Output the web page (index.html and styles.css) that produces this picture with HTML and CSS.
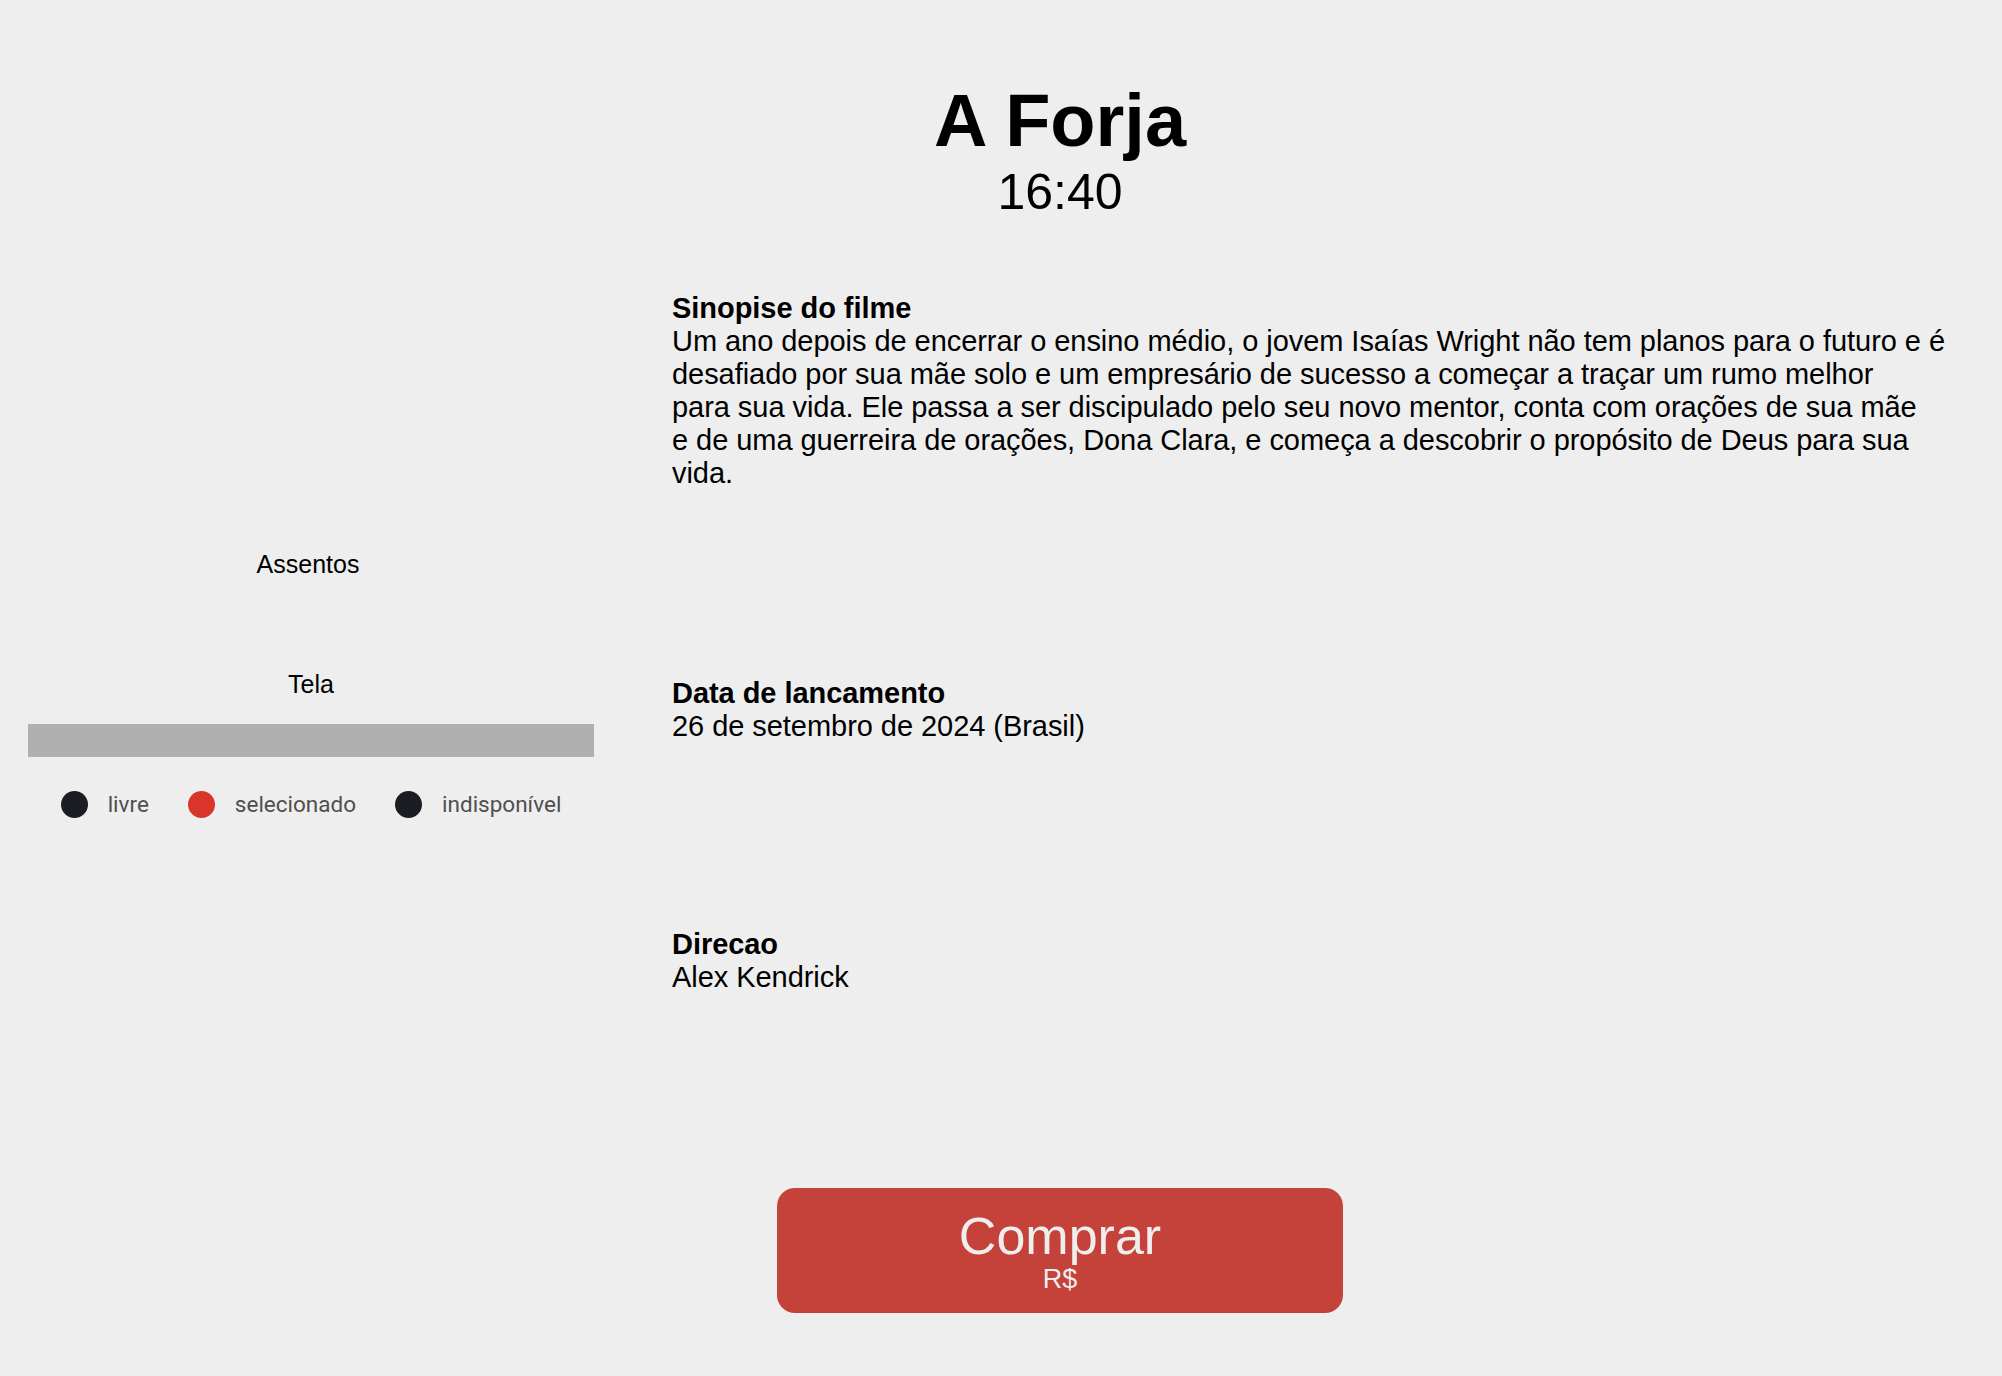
FILE: index.html
```html
<!DOCTYPE html>
<html lang="pt-BR">
<head>
<meta charset="utf-8">
<title>A Forja</title>
<link rel="stylesheet" href="styles.css">
</head>
<body>
<header class="header">
  <h1 class="title">A Forja</h1>
  <p class="time">16:40</p>
</header>
<main class="main">
  <section class="seats">
    <p class="seats-label">Assentos</p>
    <div class="seat-grid"></div>
    <p class="screen-label">Tela</p>
    <div class="screen"></div>
    <ul class="legend">
      <li class="legend-item"><span class="dot dot-free"></span>livre</li>
      <li class="legend-item"><span class="dot dot-selected"></span>selecionado</li>
      <li class="legend-item"><span class="dot dot-unavailable"></span>indisponível</li>
    </ul>
  </section>
  <section class="info">
    <div class="info-block">
      <h2 class="info-title">Sinopise do filme</h2>
      <p class="info-text">Um ano depois de encerrar o ensino médio, o jovem Isaías Wright não tem planos para o futuro e é<br>desafiado por sua mãe solo e um empresário de sucesso a começar a traçar um rumo melhor<br>para sua vida. Ele passa a ser discipulado pelo seu novo mentor, conta com orações de sua mãe<br>e de uma guerreira de orações, Dona Clara, e começa a descobrir o propósito de Deus para sua<br>vida.</p>
    </div>
    <div class="info-block info-block-release">
      <h2 class="info-title">Data de lancamento</h2>
      <p class="info-text">26 de setembro de 2024 (Brasil)</p>
    </div>
    <div class="info-block info-block-direction">
      <h2 class="info-title">Direcao</h2>
      <p class="info-text">Alex Kendrick</p>
    </div>
  </section>
</main>
<footer class="footer">
  <button class="buy" type="button">
    <span class="buy-label">Comprar</span>
    <span class="buy-price">R$</span>
  </button>
</footer>
</body>
</html>
```
FILE: styles.css
```css
* {
  box-sizing: border-box;
}

html, body {
  margin: 0;
  padding: 0;
}

body {
  background: #eeeeee;
  color: #000;
  font-family: "Liberation Sans", Arial, Helvetica, sans-serif;
  min-height: 1376px;
}

/* Header */
.header {
  margin-left: 118px;
  padding-top: 84px;
  text-align: center;
}

.title {
  margin: 0;
  font-size: 74px;
  line-height: 74px;
  font-weight: 700;
}

.time {
  margin: 9px 0 0;
  font-size: 50px;
  line-height: 50px;
  font-weight: 400;
}

/* Main two columns */
.main {
  display: flex;
  align-items: flex-start;
  gap: 78px;
  margin-top: 75px;
  padding-left: 28px;
  padding-right: 12px;
}

.seats {
  flex: 0 0 566px;
  width: 566px;
  margin-top: 258px;
  text-align: center;
  font-size: 25px;
  line-height: 28.75px;
}

.seats-label,
.screen-label {
  margin: 0;
}

.seats-label {
  padding-right: 6px;
}

.seat-grid {
  height: 91px;
}

.screen {
  height: 33px;
  margin-top: 25px;
  background: #b0b0b0;
}

.legend {
  display: flex;
  justify-content: center;
  align-items: center;
  gap: 39px;
  margin: 34px 0 0;
  padding: 0;
  list-style: none;
  font-family: Roboto, "Noto Sans", sans-serif;
  font-size: 22.5px;
  line-height: 27.6px;
  color: #4f4f4f;
}

.legend-item {
  display: flex;
  align-items: center;
  gap: 20px;
}

.dot {
  display: block;
  width: 27px;
  height: 27px;
  border-radius: 50%;
}

.dot-free,
.dot-unavailable {
  background: #1c1d22;
}

.dot-selected {
  background: #d9352b;
}

/* Info column */
.info {
  flex: 1 1 auto;
  font-size: 29px;
  line-height: 33px;
  letter-spacing: -0.05px;
}

.info-title {
  margin: 0;
  font-size: 29px;
  line-height: 33px;
  font-weight: 700;
}

.info-text {
  margin: 0;
}

.info-block-release {
  margin-top: 187px;
}

.info-block-direction {
  margin-top: 185px;
}

/* Footer / button */
.footer {
  display: flex;
  justify-content: center;
  margin-left: 118px;
  margin-top: 194px;
}

.buy {
  display: flex;
  flex-direction: column;
  align-items: center;
  width: 566px;
  height: 125px;
  padding: 22px 0 0;
  border: none;
  border-radius: 18px;
  background: #c5423b;
  color: #eeeeee;
  font-family: "Liberation Sans", Arial, Helvetica, sans-serif;
  cursor: pointer;
}

.buy-label {
  display: block;
  font-size: 52px;
  line-height: 52px;
}

.buy-price {
  display: block;
  margin-top: 4px;
  font-size: 27px;
  line-height: 27px;
}
```
